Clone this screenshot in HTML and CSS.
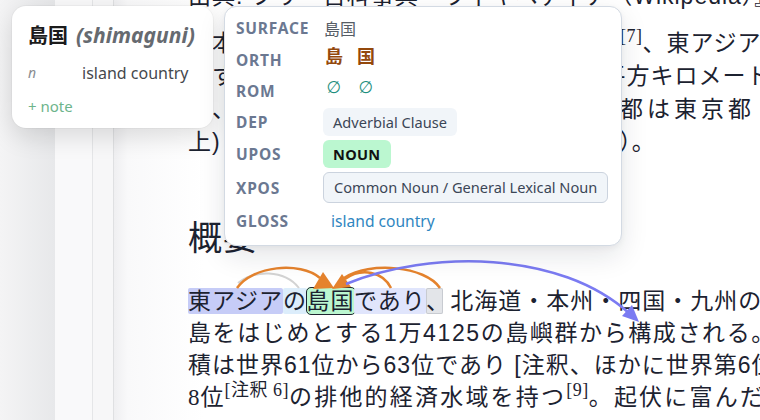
FILE: index.html
```html
<!DOCTYPE html>
<html lang="ja">
<head>
<meta charset="utf-8">
<title>日本 - Wikipedia</title>
<link rel="stylesheet" href="styles.css">
</head>
<body>
<div class="page">
  <div class="rail rail-a"></div>
  <div class="rail rail-b"></div>
  <div class="rail rail-c"></div>
  <main class="content">
    <div class="sitesub">出典: フリー百科事典『ウィキペディア（Wikipedia）』</div>
    <p class="lead">日本国（にっぽんこく、にほんこく）は<sup class="ref">[7]</sup>、東アジアに位置する国家<br>属する島国で、面積は約三十七万八千 平方キロメートル<br>島、人口は約一億二千万人を擁する。首<span class="spread">都は東京都</span>（事実<br>上) 人口最大の都市も東京である （推計）。</p>
    <h2 class="section-title">概要</h2>
    <p class="body"><span class="tk tk-a">東アジア</span><span class="tk tk-b">の</span><span class="tk tk-head">島国</span><span class="tk tk-c">であり</span><span class="tk tk-d">、</span> 北海道・本州・四国・九州の4つの大きな<br><span class="ln-wide">島をはじめとする1万4125の島嶼群から構成される。[</span><br>積は世界61位から63位であり [注釈、ほかに世界第6位<br><span class="serif">8</span>位<sup class="ref">[注釈 6]</sup><span class="ln-wider">の排他的経済水域を持つ<sup class="ref">[9]</sup>。起伏に富んだ</span></p>
  </main>

  <svg class="arcs" width="760" height="420" viewBox="0 0 760 420" aria-hidden="true">
    <path d="M238 283 C254 270 284 269 299 288" fill="none" stroke="#d3d3d3" stroke-width="2"/>
    <path d="M237 288 C252 266 300 261 320 278" fill="none" stroke="#e5832d" stroke-width="2.5"/>
    <path d="M391 288 C383 272 362 267 345 279" fill="none" stroke="#e5832d" stroke-width="2.5"/>
    <path d="M440 288 C425 266 370 261 344 278" fill="none" stroke="#e5832d" stroke-width="2.5"/>
    <polygon points="323,272 313,289 334,288" fill="#e5832d"/>
    <polygon points="342,274 332,289 351,287" fill="#e5832d"/>
    <path d="M346 284 C430 250 560 250 630 314" fill="none" stroke="#7b7bf2" stroke-width="2.5"/>
    <polygon points="639,322 622,316 632,305" fill="#7b7bf2"/>
  </svg>

  <div class="entry-card">
    <div class="entry-title"><span class="hw">島国</span><span class="rd">(shimaguni)</span></div>
    <div class="sense"><span class="pos">n</span><span class="gl">island country</span></div>
    <div class="add-note">+ note</div>
  </div>

  <div class="tok-pop">
    <dl class="fields">
      <dt>Surface</dt><dd class="v-surface">島国</dd>
      <dt>Orth</dt><dd class="v-orth"><span>島</span><span>国</span></dd>
      <dt class="dt-rom">Rom</dt><dd class="v-rom"><span>∅</span><span>∅</span></dd>
      <dt>Dep</dt><dd><span class="pill">Adverbial Clause</span></dd>
      <dt>Upos</dt><dd><span class="pill pill-upos">NOUN</span></dd>
      <dt>Xpos</dt><dd><span class="pill pill-xpos">Common Noun / General Lexical Noun</span></dd>
      <dt>Gloss</dt><dd class="v-gloss">island country</dd>
    </dl>
  </div>
</div>
</body>
</html>
```

FILE: styles.css
```css
html, body {
  margin: 0;
  padding: 0;
}
body {
  width: 760px;
  height: 420px;
  overflow: hidden;
  background: #ffffff;
  font-family: "Liberation Sans", "Noto Sans CJK JP", sans-serif;
}
.page {
  position: relative;
  display: flex;
  width: 760px;
  height: 420px;
  overflow: hidden;
}
.rail { flex: none; }
.rail-a {
  width: 55px;
  background: linear-gradient(to right, #f4f4f5, #e7e8ea);
}
.rail-b {
  width: 37px;
  background: #f9f9fa;
  border-right: 1px solid #e5e6e8;
}
.rail-c {
  width: 20px;
  background: #f7f7f8;
  border-right: 1px solid #dfe0e2;
}
.content {
  flex: 1;
  min-width: 0;
  padding-left: 74px;
  background: linear-gradient(to right, #efeff1, #f9f9fa 14px, #ffffff 90px);
  color: #1c2230;
  font-size: 23px;
  letter-spacing: 1px;
  white-space: nowrap;
}
.sitesub {
  margin-top: -20px;
  line-height: 33px;
}
.lead {
  margin: 14px 0 0;
  line-height: 33px;
}
.spread { letter-spacing: 4px; }
.section-title {
  margin: 57px 0 0;
  font-size: 34px;
  line-height: 40px;
  font-weight: 400;
  font-family: "Noto Sans CJK JP", sans-serif;
}
.body {
  margin: 29px 0 0;
  line-height: 32px;
}
.ln-wide { letter-spacing: 1.6px; }
.ln-wider { letter-spacing: 2.2px; }
.ref {
  font-family: "Liberation Serif", "Noto Sans CJK JP", serif;
  font-size: 18px;
  line-height: 1;
  letter-spacing: 0.5px;
}
.serif { font-family: "Liberation Serif", serif; }

.tk { border-radius: 2px; }
.tk-a { background: #c6ccf7; }
.tk-b { background: #dcedfb; }
.tk-head {
  background: #bbf7d0;
  border: 1.5px solid #1f2430;
  border-radius: 5px;
  margin: 0 -1.5px;
}
.tk-c { background: #e0e5fc; }
.tk-d {
  background: #e3e5e9;
  box-shadow: inset 0 0 0 1px #c8cbd1;
  letter-spacing: -6px;
}

.arcs {
  position: absolute;
  left: 0;
  top: 0;
  pointer-events: none;
}

/* dictionary entry card */
.entry-card {
  position: absolute;
  left: 12px;
  top: 6px;
  width: 201px;
  height: 122px;
  box-sizing: border-box;
  padding: 16px 16px;
  background: #ffffff;
  border-radius: 14px;
  box-shadow: 0 8px 26px rgba(0, 0, 0, 0.13), 0 0 0 1px rgba(0, 0, 0, 0.03);
  font-family: "Noto Sans", "Noto Sans CJK JP", sans-serif;
  white-space: nowrap;
}
.entry-title {
  font-size: 20px;
  line-height: 26px;
  font-weight: 700;
}
.hw { color: #1b1b1b; }
.rd {
  margin-left: 8px;
  font-size: 21px;
  color: #666a70;
  font-style: italic;
}
.sense {
  display: flex;
  margin-top: 12px;
  line-height: 24px;
}
.pos {
  width: 54px;
  font-size: 14px;
  font-style: italic;
  color: #8a8d92;
}
.gl {
  font-size: 16px;
  color: #45484d;
}
.add-note {
  margin-top: 11px;
  font-size: 15px;
  line-height: 20px;
  color: #6db48b;
}

/* token popover */
.tok-pop {
  position: absolute;
  left: 224px;
  top: 6px;
  width: 398px;
  height: 240px;
  box-sizing: border-box;
  padding: 7px 12px 0 11px;
  background: #ffffff;
  border: 1px solid #d3dae3;
  border-radius: 12px;
  box-shadow: 0 10px 28px rgba(15, 23, 42, 0.11), 0 2px 6px rgba(15, 23, 42, 0.05);
  font-family: "Noto Sans", "Noto Sans CJK JP", sans-serif;
  white-space: nowrap;
}
.fields {
  display: grid;
  grid-template-columns: 87px 1fr;
  row-gap: 4px;
  align-items: center;
  margin: 0;
}
.fields dt {
  line-height: 28px;
  font-size: 15.5px;
  font-weight: 700;
  letter-spacing: 0.8px;
  text-transform: uppercase;
  color: #6b7891;
}
.fields dt.dt-rom { line-height: 26px; }
.fields dd {
  margin: 0;
  display: flex;
}
.v-surface {
  font-size: 16px;
  color: #565d66;
  padding-left: 1px;
}
.v-orth {
  align-self: start;
  gap: 14px;
  padding-left: 2px;
  font-size: 18px;
  line-height: 20px;
  font-weight: 700;
  color: #94480c;
}
.v-rom {
  align-self: start;
  gap: 14px;
  padding-left: 2px;
  font-family: "DejaVu Sans", sans-serif;
  font-size: 17px;
  line-height: 18px;
  font-style: italic;
  color: #1f8f7e;
}
.v-rom span {
  width: 18px;
  text-align: center;
}
.pill {
  padding: 4px 10px;
  font-size: 14.6px;
  line-height: 20px;
  color: #3b4656;
  background: #f1f5f9;
  border-radius: 6px;
}
.pill-upos {
  background: #bbf7d0;
  color: #111111;
  font-weight: 700;
  letter-spacing: 0.3px;
}
.pill-xpos {
  padding: 5px 10px;
  line-height: 19px;
  border: 1px solid #cbd3de;
}
.v-gloss {
  padding-left: 8px;
  font-size: 15.6px;
  line-height: 28px;
  color: #2f86bf;
}
```
